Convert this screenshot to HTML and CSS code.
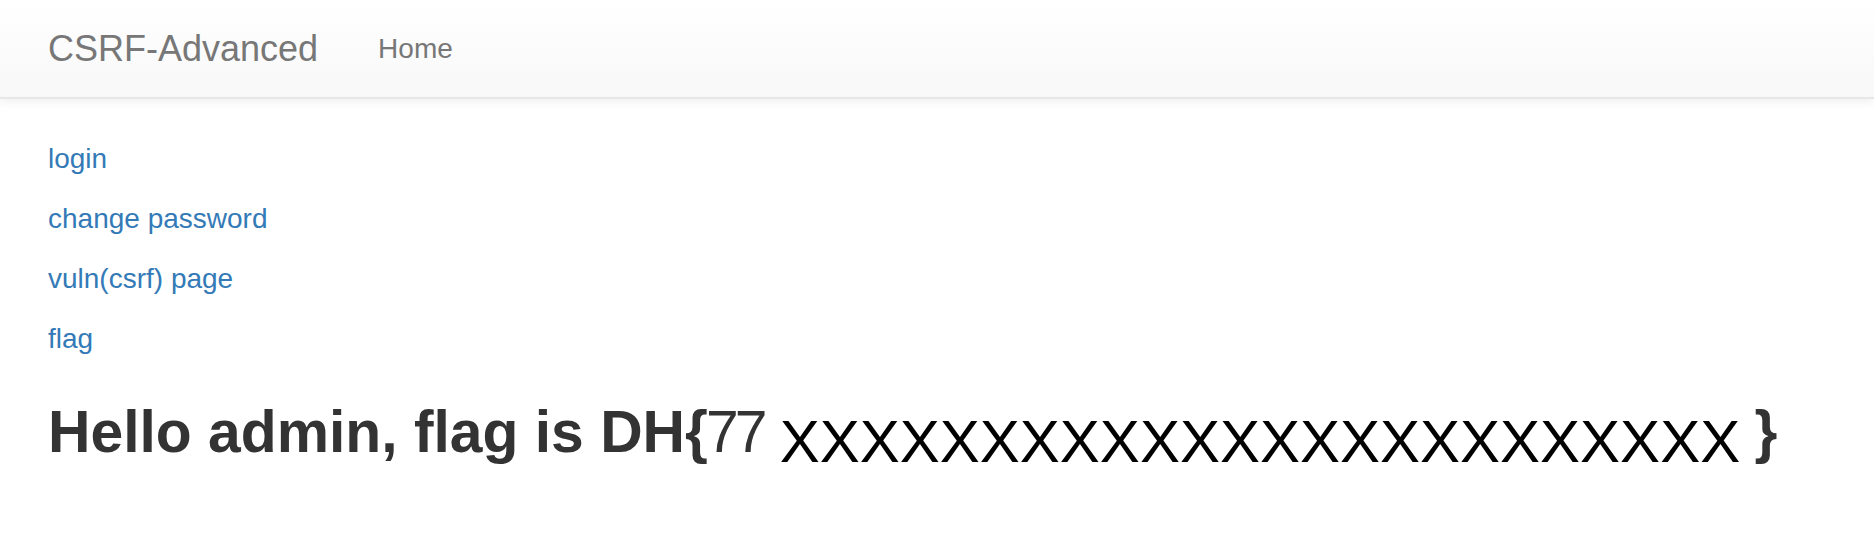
FILE: index.html
```html
<!DOCTYPE html>
<html lang="en">
<head>
<meta charset="utf-8">
<title>CSRF-Advanced</title>
<link rel="stylesheet" href="styles.css">
</head>
<body>
<nav class="navbar">
  <div class="navbar-inner">
    <a class="navbar-brand" href="#">CSRF-Advanced</a>
    <ul class="nav">
      <li><a class="nav-link" href="#">Home</a></li>
    </ul>
  </div>
</nav>
<main class="content">
  <p class="item"><a class="link" href="#">login</a></p>
  <p class="item"><a class="link" href="#">change password</a></p>
  <p class="item"><a class="link" href="#">vuln(csrf) page</a></p>
  <p class="item"><a class="link" href="#">flag</a></p>
  <h2 class="flag">Hello admin, flag is DH<span class="brace-open">{</span><span class="num">77</span> <span class="mask">XXXXXXXXXXXXXXXXXXXXXXXX</span> <span class="brace-close">}</span></h2>
</main>
</body>
</html>
```
FILE: styles.css
```css
* { box-sizing: border-box; }
html, body { margin: 0; padding: 0; }
body {
  font-family: "Liberation Sans", Arial, Helvetica, sans-serif;
  font-size: 28px;
  line-height: 40px;
  color: #333;
  background: #fff;
}
a { text-decoration: none; }

.navbar {
  height: 99px;
  background-image: linear-gradient(to bottom, #ffffff 0%, #f8f8f8 100%);
  border-bottom: 2px solid #e7e7e7;
  box-shadow: inset 0 2px 0 rgba(255,255,255,.15), 0 2px 10px rgba(0,0,0,.075);
}
.navbar-inner {
  display: flex;
  align-items: center;
  height: 97px;
  padding-left: 18px;
}
.navbar-brand {
  font-size: 36px;
  line-height: 40px;
  color: #777;
  padding: 0 30px;
}
.nav {
  display: flex;
  list-style: none;
  margin: 0;
  padding: 0;
}
.nav-link {
  font-size: 28px;
  line-height: 40px;
  color: #777;
  padding: 0 30px;
}

.content {
  padding: 40px 48px 0;
}
.item {
  margin: 0 0 20px;
}
.link { color: #337ab7; }

.flag {
  margin: 40px 0 0;
  font-size: 58.8px;
  line-height: 66px;
  font-weight: bold;
  color: #333;
  white-space: nowrap;
}
.brace-open {
  font-weight: bold;
  margin-right: -2px;
}
.num {
  font-weight: normal;
  letter-spacing: -4px;
}
.mask {
  font-size: 60px;
  font-weight: normal;
  color: #000;
  vertical-align: -10px;
}
.brace-close {
  font-weight: bold;
  margin-left: -2px;
}
```
